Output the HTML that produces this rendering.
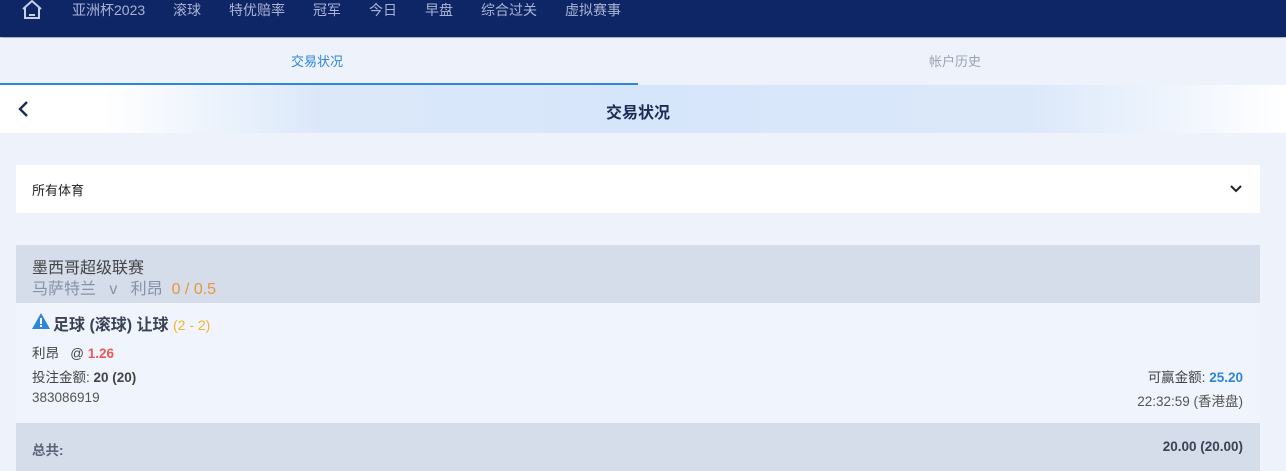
<!DOCTYPE html>
<html><head><meta charset="utf-8"><style>
*{margin:0;padding:0;box-sizing:border-box}
body{width:1286px;height:471px;overflow:hidden;background:#eef3fb;font-family:"Liberation Sans","Noto Sans CJK SC",sans-serif;position:relative}
.abs{position:absolute;white-space:nowrap}
.nav{position:absolute;left:0;top:0;width:1286px;height:37px;background:#0e2566;box-shadow:0 2px 4px rgba(0,0,0,.35)}
.nav span{position:absolute;top:0px;color:#a9b4d4;font-size:14px}
</style></head><body>
<div class="nav">
<svg class="abs" style="left:21px;top:0" width="22" height="20" viewBox="0 0 22 20"><path d="M2 9 L11 1 L20 9 M4 7 V18 H18 V7 M8 15 H14" fill="none" stroke="#c8d0e6" stroke-width="2"/></svg>
<span style="left:72px">亚洲杯2023</span><span style="left:173px">滚球</span><span style="left:229px">特优赔率</span><span style="left:313px">冠军</span><span style="left:369px">今日</span><span style="left:425px">早盘</span><span style="left:481px">综合过关</span><span style="left:565px">虚拟赛事</span>
</div>
<div class="abs" style="left:0;top:38px;width:1286px;height:46px;background:#eef3fb"></div>
<div class="abs" style="left:291px;top:51px;font-size:13px;color:#2e86d8">交易状况</div>
<div class="abs" style="left:929px;top:51px;font-size:13px;color:#9aa3b3">帐户历史</div>
<div class="abs" style="left:0;top:83px;width:638px;height:2px;background:#2e86d8"></div>
<div class="abs" style="left:0;top:85px;width:1286px;height:48px;background:linear-gradient(90deg,#fff 0%,#fff 8%,#dbe8fa 25%,#d6e6fa 50%,#dbe8fa 80%,#fff 100%)"></div>
<svg class="abs" style="left:17px;top:100px" width="12" height="18" viewBox="0 0 12 18"><path d="M10 2 L3 9 L10 16" fill="none" stroke="#1c2b55" stroke-width="2.4"/></svg>
<div class="abs" style="left:606px;top:99px;font-size:16px;font-weight:bold;color:#1c2b55">交易状况</div>
<div class="abs" style="left:16px;top:165px;width:1244px;height:48px;background:#fff"></div>
<div class="abs" style="left:32px;top:180px;font-size:13px;color:#222">所有体育</div>
<svg class="abs" style="left:1230px;top:184px" width="12" height="10" viewBox="0 0 12 10"><path d="M1 2 L6 7 L11 2" fill="none" stroke="#222" stroke-width="2"/></svg>
<div class="abs" style="left:16px;top:245px;width:1244px;height:58px;background:#d5dcea"></div>
<div class="abs" style="left:32px;top:254px;font-size:16px;color:#444">墨西哥超级联赛</div>
<div class="abs" style="left:32px;top:275px;font-size:16px;color:#8592a8">马萨特兰 &nbsp; v &nbsp; 利昂 &nbsp;<span style="color:#e8963c">0 / 0.5</span></div>
<div class="abs" style="left:16px;top:303px;width:1244px;height:120px;background:#f0f4fd"></div>
<svg class="abs" style="left:32px;top:313px" width="18" height="16" viewBox="0 0 18 16"><path d="M9 0 L18 16 H0 Z" fill="#2e86d8"/><rect x="8" y="5" width="2" height="6" fill="#fff"/><rect x="8" y="12" width="2" height="2" fill="#fff"/></svg>
<div class="abs" style="left:53px;top:311px;font-size:16px;font-weight:bold;color:#3a4256">足球 (滚球) 让球 <span style="font-weight:normal;font-size:14px;color:#f0b429">(2 - 2)</span></div>
<div class="abs" style="left:32px;top:342px;font-size:13.5px;color:#444">利昂 &nbsp; @ <b style="color:#e85a5a">1.26</b></div>
<div class="abs" style="left:32px;top:366px;font-size:13.5px;color:#444">投注金额: <b>20 (20)</b></div>
<div class="abs" style="left:32px;top:390px;font-size:13.5px;color:#555">383086919</div>
<div class="abs" style="right:43px;top:366px;font-size:13.5px;color:#444">可赢金额: <b style="color:#2e86d8">25.20</b></div>
<div class="abs" style="right:43px;top:390px;font-size:13.5px;color:#555">22:32:59 (香港盘)</div>
<div class="abs" style="left:16px;top:423px;width:1244px;height:48px;background:#d5dcea"></div>
<div class="abs" style="left:32px;top:439px;font-size:13.5px;font-weight:bold;color:#5a6478">总共:</div>
<div class="abs" style="right:43px;top:439px;font-size:13.5px;font-weight:bold;color:#3a4256">20.00 (20.00)</div>
</body></html>
